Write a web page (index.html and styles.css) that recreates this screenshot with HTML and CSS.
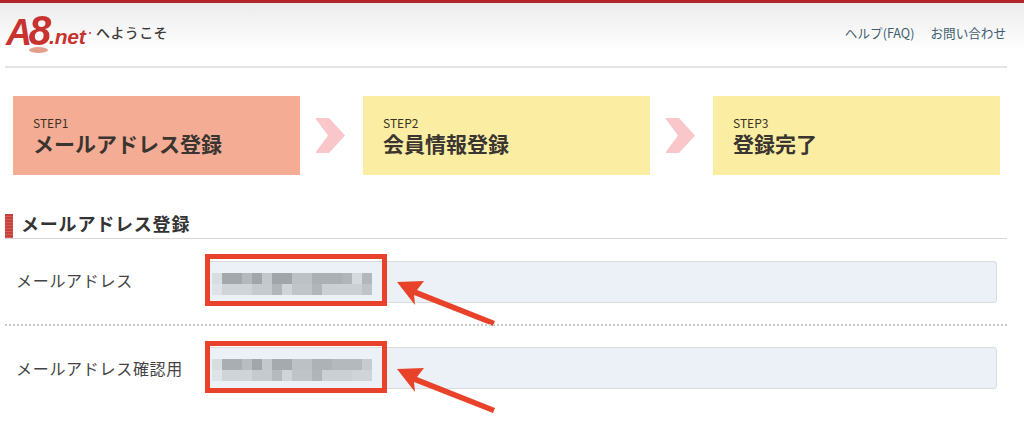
FILE: index.html
```html
<!DOCTYPE html>
<html lang="ja">
<head>
<meta charset="utf-8">
<title>A8.net</title>
<link rel="stylesheet" href="styles.css">
</head>
<body>
<div class="page">
  <header class="header">
    <div class="brand">
      <div class="logo">
        <span class="logo-a">A</span><span class="logo-8">8</span><span class="logo-net">.net</span><span class="logo-dot"></span><span class="logo-reg"></span>
      </div>
      <span class="welcome">へようこそ</span>
    </div>
    <nav class="nav">
      <a class="nav-link">ヘルプ(FAQ)</a>
      <a class="nav-link">お問い合わせ</a>
    </nav>
  </header>

  <section class="steps">
    <div class="step step-active"><span class="step-no">STEP1</span><span class="step-name">メールアドレス登録</span></div>
    <svg class="chev" viewBox="1 0 31 35"><polygon points="0,0 14,0 30,17.500 14,35 0,35 13,17.500"/></svg>
    <div class="step"><span class="step-no">STEP2</span><span class="step-name">会員情報登録</span></div>
    <svg class="chev" viewBox="1 0 31 35"><polygon points="0,0 14,0 30,17.500 14,35 0,35 13,17.500"/></svg>
    <div class="step"><span class="step-no">STEP3</span><span class="step-name">登録完了</span></div>
  </section>

  <h2 class="section-title">メールアドレス登録</h2>

  <div class="row row-first">
    <label class="row-label">メールアドレス</label>
    <div class="field">
      <svg class="mosaic" viewBox="0 0 160 22">
        <g><rect x="10" width="20" height="11" fill="#a3a8ad"/><rect x="30" width="10" height="11" fill="#b4b9bd"/><rect x="40" width="10" height="11" fill="#a1a6ab"/><rect x="50" width="10" height="11" fill="#c3c8cc"/><rect x="60" width="20" height="11" fill="#a0a5aa"/><rect x="80" width="20" height="11" fill="#bcc1c5"/><rect x="100" width="30" height="11" fill="#aab0b4"/><rect x="130" width="10" height="11" fill="#b0b5b9"/><rect x="140" width="10" height="11" fill="#d5dadd"/><rect x="150" width="10" height="11" fill="#b2b7bb"/><rect x="0" width="10" height="11" fill="#d8dde0"/></g>
        <g><rect y="11" width="10" height="11" fill="#dfe3e7"/><rect x="10" y="11" width="30" height="11" fill="#cfd4d8"/><rect x="40" y="11" width="20" height="11" fill="#c5cace"/><rect x="60" y="11" width="10" height="11" fill="#b0b5b9"/><rect x="70" y="11" width="10" height="11" fill="#cfd4d8"/><rect x="80" y="11" width="20" height="11" fill="#bfc4c8"/><rect x="100" y="11" width="10" height="11" fill="#b0b5b9"/><rect x="110" y="11" width="40" height="11" fill="#cbd0d4"/><rect x="150" y="11" width="10" height="11" fill="#bfc4c8"/></g>
      </svg>
    </div>
    <div class="callout callout-box"></div>
    <svg class="callout-arrow" viewBox="0 0 100 46"><polygon points="0,1 27,0 20,9 98,40 96,45 17,14 18,24"/></svg>
  </div>

  <div class="row row-second">
    <label class="row-label">メールアドレス確認用</label>
    <div class="field">
      <svg class="mosaic" viewBox="0 0 160 22">
        <g><rect x="0" width="10" height="11" fill="#d8dde0"/><rect x="10" width="20" height="11" fill="#a9aeb3"/><rect x="30" width="10" height="11" fill="#b8bdc1"/><rect x="40" width="10" height="11" fill="#a1a6ab"/><rect x="50" width="10" height="11" fill="#c3c8cc"/><rect x="60" width="20" height="11" fill="#a5aaaf"/><rect x="80" width="20" height="11" fill="#bcc1c5"/><rect x="100" width="20" height="11" fill="#adb2b7"/><rect x="120" width="30" height="11" fill="#b4b9bd"/><rect x="150" width="10" height="11" fill="#c6cbcf"/></g>
        <g><rect y="11" width="10" height="11" fill="#dfe3e7"/><rect x="10" y="11" width="30" height="11" fill="#cfd4d8"/><rect x="40" y="11" width="20" height="11" fill="#c5cace"/><rect x="60" y="11" width="10" height="11" fill="#b5babe"/><rect x="70" y="11" width="10" height="11" fill="#cfd4d8"/><rect x="80" y="11" width="20" height="11" fill="#bfc4c8"/><rect x="100" y="11" width="10" height="11" fill="#b0b5b9"/><rect x="110" y="11" width="30" height="11" fill="#cbd0d4"/><rect x="140" y="11" width="20" height="11" fill="#cfd4d8"/></g>
      </svg>
    </div>
    <div class="callout callout-box"></div>
    <svg class="callout-arrow" viewBox="0 0 100 46"><polygon points="0,1 27,0 20,9 98,40 96,45 17,14 18,24"/></svg>
  </div>
</div>
</body>
</html>
```
FILE: styles.css
```css
* { box-sizing: border-box; }
html, body { margin: 0; padding: 0; background: #fff; }
body {
  width: 1024px;
  height: 426px;
  overflow: hidden;
  font-family: "Noto Sans CJK JP", "Noto Sans", sans-serif;
  color: #333;
}
.page {
  padding: 0 17px 0 5px;
  border-top: 3px solid #b2262a;
  background: linear-gradient(#ececec 0, #fff 48px) no-repeat;
  height: 426px;
}
.header {
  height: 65px;
  border-bottom: 2px solid #e4e4e4;
  display: flex;
  justify-content: space-between;
  align-items: flex-start;
}
.brand { display: flex; align-items: flex-start; }
.logo {
  position: relative;
  width: 86px;
  height: 50px;
  margin-left: 1px;
  white-space: nowrap;
  font-family: "Liberation Sans", sans-serif;
  font-style: italic;
  font-weight: 700;
  color: #c8322f;
}
.logo-a {
  position: absolute;
  left: 0;
  top: 12px;
  font-size: 36px;
  line-height: 36px;
}
.logo-8 {
  position: absolute;
  left: 22px;
  top: 6px;
  font-size: 43px;
  line-height: 43px;
  transform: scaleX(.95);
}
.logo-net {
  position: absolute;
  left: 43px;
  top: 23px;
  font-size: 21px;
  line-height: 22px;
  letter-spacing: -.2px;
}
.logo-dot {
  position: absolute;
  left: 23px;
  top: 44px;
  width: 19px;
  height: 6px;
  border-radius: 50%;
  background: #e2a08c;
}
.logo-reg {
  position: absolute;
  left: 83px;
  top: 29px;
  width: 2px;
  height: 2px;
  border-radius: 50%;
  background: #c8322f;
}
.welcome {
  margin-top: 19px;
  margin-left: 4px;
  font-size: 14px;
  line-height: 20px;
  font-weight: 500;
  letter-spacing: .4px;
  color: #3c3c3c;
}
.nav { display: flex; gap: 16px; margin: 21px 1px 0 0; }
.nav-link { font-size: 12.6px; line-height: 18px; color: #3f5f70; }
.steps {
  display: flex;
  align-items: center;
  gap: 16px;
  margin: 28px 0 0 8px;
}
.step {
  width: 287px;
  height: 79px;
  padding: 19px 20px 0;
  background: #fbeea3;
  display: flex;
  flex-direction: column;
}
.step-active { background: #f4ad94; }
.step-no { font-size: 12px; line-height: 15px; color: #3a3226; }
.step-name { font-size: 21px; line-height: 27px; font-weight: 700; color: #3a3530; }
.chev { width: 31px; height: 35px; flex: none; }
.chev polygon { fill: #f9c6c9; }
.section-title {
  margin: 38px 0 0;
  height: 26px;
  padding-left: 16px;
  border-bottom: 1px solid #d6d6d6;
  background: repeating-linear-gradient(#c8403c 0, #c8403c 2px, #d65a55 2px, #d65a55 3px) no-repeat 0 1px / 8px 24px;
  font-size: 18px;
  line-height: 21px;
  font-weight: 700;
  letter-spacing: .8px;
  color: #333;
}
.row {
  position: relative;
  height: 86px;
  display: flex;
  padding-left: 201px;
}
.row-first { height: 85px; padding-top: 22px; }
.row-second { padding-top: 21px; border-top: 2px dotted #c8c8c8; }
.row-label {
  position: absolute;
  left: 11px;
  font-size: 16px;
  line-height: 22px;
  letter-spacing: .7px;
  color: #444;
}
.row-first .row-label { top: 30px; }
.row-second .row-label { top: 31px; }
.field {
  position: relative;
  width: 791px;
  height: 42px;
  background: #ebf1f6;
  border: 1px solid #d8dcdf;
  border-radius: 3px;
}
.mosaic {
  position: absolute;
  left: 5px;
  top: 11px;
  width: 160px;
  height: 22px;
  filter: blur(.6px);
}
.callout-box {
  position: absolute;
  left: 200px;
  top: 15px;
  width: 182px;
  height: 52px;
  border: 5px solid #e8432a;
}
.callout-arrow {
  position: absolute;
  left: 392px;
  top: 42px;
  width: 100px;
  height: 46px;
}
.callout-arrow polygon { fill: #e8432a; }
```
